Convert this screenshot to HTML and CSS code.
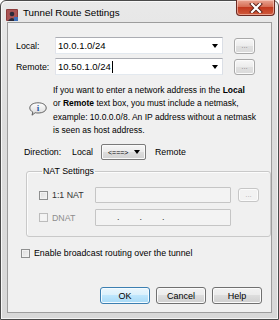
FILE: index.html
```html
<!DOCTYPE html>
<html lang="en">
<head>
    <meta charset="UTF-8">
    <title>Tunnel Route Settings</title>
    <link rel="stylesheet" href="styles.css">
</head>
<body>

<div class="window">
    <div class="titlebar">
        <svg class="app-icon" width="12" height="12" viewBox="0 0 12 12">
            <rect x="0" y="0" width="12" height="12" rx="1" fill="#8e3c3c"/>
            <rect x="1" y="1" width="10" height="10" fill="#a85454"/>
            <circle cx="6" cy="5" r="2.3" fill="#2a2a3a"/>
            <path d="M2 12 Q6 6 10 12 Z" fill="#2a2a3a"/>
            <rect x="8" y="8" width="4" height="4" fill="#3d6fb8"/>
        </svg>
        <span class="title">Tunnel Route Settings</span>
        <div class="close-btn">
            <svg width="14" height="10" viewBox="0 0 14 10">
                <path d="M3 1 L11 9 M11 1 L3 9" stroke="#5a2018" stroke-width="4" stroke-linecap="square"/>
                <path d="M3 1 L11 9 M11 1 L3 9" stroke="#fff" stroke-width="2.2" stroke-linecap="square"/>
            </svg>
        </div>
    </div>

    <div class="client">
        <div class="addr-row first">
            <label class="addr-label">Local:</label>
            <div class="combo"><span class="combo-text">10.0.1.0/24</span><span class="arrow"></span></div>
            <button class="dots">...</button>
        </div>
        <div class="addr-row">
            <label class="addr-label">Remote:</label>
            <div class="combo"><span class="combo-text">10.50.1.0/24</span><span class="caret"></span><span class="arrow"></span></div>
            <button class="dots">...</button>
        </div>

        <div class="info">
            <svg class="info-icon" width="18" height="14" viewBox="0 0 18 14">
                <defs>
                    <linearGradient id="bub" x1="0" y1="0" x2="0" y2="1">
                        <stop offset="0" stop-color="#ffffff"/>
                        <stop offset="1" stop-color="#d8d8d8"/>
                    </linearGradient>
                </defs>
                <path d="M9 0.8 C14 0.8 17.2 3 17.2 6 C17.2 9 14 11 9 11 C8 11 7 10.9 6.2 10.7 L3 13.2 L3.8 10 C1.8 9 0.8 7.6 0.8 6 C0.8 3 4 0.8 9 0.8 Z" fill="url(#bub)" stroke="#555" stroke-width="0.9"/>
                <text x="9" y="9.3" text-anchor="middle" font-family="Liberation Serif, serif" font-size="9" font-weight="bold" fill="#2a5aa8">i</text>
            </svg>
            <p class="info-text">If you want to enter a network address in the <b>Local</b><br>or <b>Remote</b> text box, you must include a netmask,<br>example: 10.0.0.0/8. An IP address without a netmask<br>is seen as host address.</p>
        </div>

        <div class="direction">
            <span class="dir-label">Direction:</span>
            <span class="dir-local">Local</span>
            <div class="dir-select"><span>&lt;===&gt;</span><span class="arrow"></span></div>
            <span class="dir-remote">Remote</span>
        </div>

        <fieldset class="nat">
            <legend>NAT Settings</legend>
            <div class="nat-row">
                <span class="check"></span>
                <span class="nat-label">1:1 NAT</span>
                <div class="nat-input"></div>
                <button class="dots disabled">...</button>
            </div>
            <div class="nat-row second">
                <span class="check disabled"></span>
                <span class="nat-label disabled">DNAT</span>
                <div class="nat-input ip">
                    <span>.</span><span>.</span><span>.</span>
                </div>
            </div>
        </fieldset>

        <div class="broadcast">
            <span class="check"></span>
            <span>Enable broadcast routing over the tunnel</span>
        </div>

        <div class="buttons">
            <button class="btn default">OK</button>
            <button class="btn">Cancel</button>
            <button class="btn">Help</button>
        </div>
    </div>
</div>

</body>
</html>
```

FILE: styles.css
```css
* {
    box-sizing: border-box;
}

body, html {
    margin: 0;
    padding: 0;
    background: #ffffff;
}

.window {
    width: 279px;
    height: 320px;
    border: 1px solid #4a4a4a;
    border-radius: 6px 6px 0 0;
    background: linear-gradient(#e9e9e9, #dcdcdc 40%, #d8d8d8);
    box-shadow: inset 1px 1px 0 #f8f8f8, inset -1px -1px 0 #f4f4f4;
    padding: 0 6px 6px 6px;
    display: flex;
    flex-direction: column;
    font-family: "Liberation Sans", Arial, sans-serif;
    font-size: 8.8px;
    color: #000;
}

.titlebar {
    height: 21px;
    display: flex;
    align-items: center;
    position: relative;
}

.app-icon {
    margin-left: -1px;
    margin-top: 6px;
}

.title {
    margin-left: 5px;
    margin-top: 2px;
    font-size: 9.8px;
    color: #000;
}

.close-btn {
    position: absolute;
    top: -1px;
    right: -3px;
    width: 39px;
    height: 16px;
    border: 1px solid #6b2a22;
    border-top: none;
    border-radius: 0 0 4px 4px;
    background: linear-gradient(#e9a593, #d66e55 45%, #c2391f 50%, #cf5a3c 100%);
    box-shadow: inset 0 0 0 1px rgba(255, 220, 210, 0.55);
    display: flex;
    align-items: center;
    justify-content: center;
}

.client {
    flex: 1;
    border: 1px solid #9d9d9d;
    background: #f0f0f0;
    display: flex;
    flex-direction: column;
    padding: 0 8px 8px 8px;
}

.addr-row {
    display: flex;
    align-items: center;
    height: 17px;
    margin-top: 4px;
}

.addr-row.first {
    margin-top: 14px;
}

.addr-label {
    width: 39px;
}

.combo {
    width: 168px;
    height: 17px;
    background: #fff;
    border: 1px solid #abadb3;
    border-color: #abadb3 #dbdfe6 #e3e9ef #e2e3ea;
    display: flex;
    align-items: center;
    padding-left: 2px;
    padding-right: 4px;
    font-size: 9.5px;
}

.caret {
    width: 1px;
    height: 12px;
    background: #000;
    margin-left: 1px;
}

.arrow {
    margin-left: auto;
    width: 0;
    height: 0;
    border-left: 3px solid transparent;
    border-right: 3px solid transparent;
    border-top: 4px solid #000;
}

.dots {
    margin-left: 11px;
    width: 21px;
    height: 16px;
    padding: 0;
    border: 1px solid #a9a9a9;
    border-radius: 3px;
    background: linear-gradient(#f7f7f7, #ececec 50%, #e0e0e0 50%, #dadada);
    box-shadow: inset 0 0 0 1px #fbfbfb;
    color: #8a8a8a;
    font-family: "Liberation Sans", Arial, sans-serif;
    font-size: 8px;
    line-height: 10px;
}

.dots.disabled {
    margin-left: 7px;
    height: 14px;
    border-color: #c6c6c6;
    background: #f2f2f2;
    color: #b0b0b0;
}

.info {
    display: flex;
    align-items: center;
    margin-top: 9px;
    padding-left: 13px;
}

.info-icon {
    flex-shrink: 0;
    margin-top: -4px;
}

.info-text {
    margin: 0 0 0 6px;
    font-size: 8.5px;
    line-height: 13.3px;
    white-space: nowrap;
}

.direction {
    display: flex;
    align-items: center;
    margin-top: 7px;
    height: 16px;
    padding-left: 8px;
}

.dir-label {
    width: 48px;
}

.dir-local {
    width: 29px;
}

.dir-select {
    width: 45px;
    height: 16px;
    border: 1px solid #7a7a7a;
    border-radius: 2px;
    background: linear-gradient(#f6f6f6, #ebebeb 50%, #dddddd 50%, #d2d2d2);
    box-shadow: inset 0 0 0 1px #fafafa;
    display: flex;
    align-items: center;
    padding: 0 5px 0 6px;
    font-size: 7px;
}

.dir-remote {
    margin-left: 9px;
}

.nat {
    margin: 5px 0 0 10px;
    width: 245px;
    height: 72px;
    border: 1px solid #c9c9c9;
    border-radius: 3px;
    box-shadow: inset 1px 1px 0 #fcfcfc;
    padding: 10px 0 0 12px;
}

.nat legend {
    padding: 0 1px;
    margin-left: 3px;
    line-height: 12px;
}

.nat-row {
    display: flex;
    align-items: center;
    height: 16px;
}

.nat-row.second {
    margin-top: 6px;
    height: 17px;
}

.check {
    width: 9px;
    height: 9px;
    border: 1px solid #8e8f8f;
    background: linear-gradient(135deg, #dcdcdc, #f4f4f4);
    box-shadow: inset 0 0 0 1px #f2f2f2;
    flex-shrink: 0;
}

.check.disabled {
    border-color: #bcbcbc;
    background: #f4f4f4;
}

.nat-label {
    margin-left: 4px;
    width: 43px;
    color: #333;
}

.nat-label.disabled {
    color: #8d8d8d;
}

.nat-input {
    width: 136px;
    height: 16px;
    border: 1px solid #c5c5c5;
    border-radius: 1px;
    background: #f3f3f3;
}

.nat-row.second .nat-input {
    height: 17px;
}

.nat-input.ip {
    display: flex;
    align-items: center;
    padding-left: 21px;
    gap: 20px;
    color: #333;
    font-size: 9px;
    line-height: 9px;
}

.broadcast {
    display: flex;
    align-items: center;
    margin-top: 10px;
    padding-left: 5px;
    height: 12px;
}

.broadcast span + span {
    margin-left: 4px;
}

.buttons {
    margin-top: auto;
    display: flex;
    justify-content: flex-end;
    gap: 6px;
    padding-right: 1px;
}

.btn {
    width: 50px;
    height: 17px;
    padding: 0;
    border: 1px solid #707070;
    border-radius: 3px;
    background: linear-gradient(#f2f2f2, #ebebeb 50%, #dddddd 50%, #cfcfcf);
    box-shadow: inset 0 0 0 1px #fbfbfb;
    font-family: "Liberation Sans", Arial, sans-serif;
    font-size: 9px;
    color: #000;
}

.btn.default {
    border-color: #3c7fb1;
    background: linear-gradient(#eaf6fd, #d9f0fc 50%, #bee6fd 50%, #a7d9f5);
    box-shadow: inset 0 0 0 1px #f4fbff;
}
```
